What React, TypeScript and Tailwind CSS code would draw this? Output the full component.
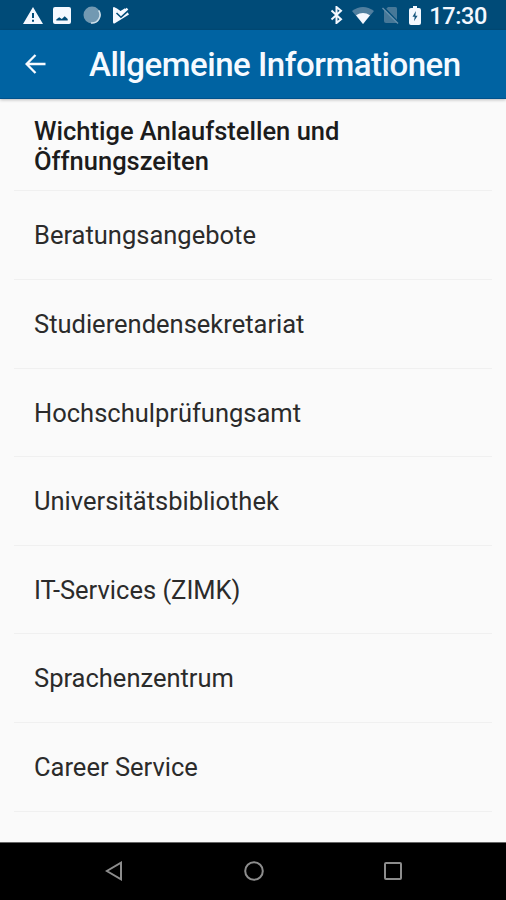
const entries = [
    'Beratungsangebote',
    'Studierendensekretariat',
    'Hochschulprüfungsamt',
    'Universitätsbibliothek',
    'IT-Services (ZIMK)',
    'Sprachenzentrum',
    'Career Service',
];

function StatusBar() {
    return (
        <div className="flex h-[30px] shrink-0 items-center justify-between bg-[#004b78] pl-[23px] pr-[19px] text-[#f4f8ff]">
            <div className="flex items-center">
                <svg width="20" height="17" viewBox="0 0 20 17" fill="currentColor">
                    <path fillRule="evenodd" d="M10 0 20 17H0ZM9 6v5h2V6ZM9 12.7v2h2v-2Z" />
                </svg>
                <svg className="ml-[10px]" width="18" height="17" viewBox="0 0 18 17" fill="currentColor">
                    <path fillRule="evenodd" d="M2 0h14q2 0 2 2v13q0 2-2 2H2q-2 0-2-2V2q0-2 2-2ZM3.3 13.5h11.4v-1.6L11.7 9.3 8.8 12 6.2 10.2 3.3 12.4Z" />
                </svg>
                <svg className="ml-[12px]" width="18" height="18" viewBox="0 0 18 18">
                    <circle cx="9" cy="9" r="8.5" fill="#7299b2" />
                    <path d="M15.7 4.4A8.2 8.2 0 0 1 8 17" fill="none" stroke="#cfe0ea" strokeWidth="1.6" />
                </svg>
                <svg className="ml-[12px]" width="17" height="17" viewBox="0 0 17 17">
                    <path d="M1 0 4 1.5 7.5 4 12 1.3 16 7.5 1.5 16.5Q0 17 0 15V1Q0 0 1 0Z" fill="currentColor" />
                    <path d="m4 5.5 4 3.7 7.5-6.5" fill="none" stroke="#004b78" strokeWidth="3" />
                    <path d="m4.7 4.3 3.3 3.3 6.5-6" fill="none" stroke="currentColor" strokeWidth="2.4" />
                </svg>
            </div>

            <div className="flex items-center">
                <svg width="13" height="18" viewBox="0 0 12 18" fill="none" stroke="currentColor" strokeWidth="2">
                    <path d="m1 4.5 9.5 8.8L6 17V1l4.5 3.7L1 13.5" />
                </svg>
                <svg className="ml-[9px]" width="22" height="17" viewBox="0 0 22 17">
                    <path d="M0 4Q11-4 22 4L11 17Z" fill="#517f9f" />
                    <path d="M4 8.2q7-4.6 14 0L11 17Z" fill="currentColor" />
                </svg>
                <svg className="ml-[8px]" width="17" height="18" viewBox="0 0 17 18">
                    <path d="M6 1h7.5Q15 1 15 2.5V17H4q-2 0-2-2V5Z" fill="#477898" />
                    <path d="m2 1.5 14.5 15.2" stroke="#004b78" strokeWidth="1.8" />
                    <path d="m.5 2 15.5 15.5" stroke="#6690ac" strokeWidth="1.4" />
                </svg>
                <svg className="ml-[10px]" width="12" height="19" viewBox="0 0 12 19">
                    <path d="M4 0h4v2h2q2 0 2 2v13q0 2-2 2H2q-2 0-2-2V4q0-2 2-2h2Z" fill="currentColor" />
                    <path d="M6.9 5 3.5 10.8h2.2L5 15.2 8.6 9.7H6.4Z" fill="#17567f" />
                </svg>
                <span className="ml-[8px] pt-[3px] text-[23.5px] font-medium leading-none tracking-[-0.35px]">17:30</span>
            </div>
        </div>
    );
}

function AppBar() {
    return (
        <header className="z-10 flex h-[69px] shrink-0 items-center border-b border-[#00528c] bg-[#0063a2] pl-[25px] text-[#f6faff] shadow-[0_1px_3px_rgba(0,0,0,0.25)]">
            <svg width="21" height="20" viewBox="0 0 21 20" fill="none" stroke="currentColor" strokeWidth="2.3">
                <path d="M20.5 10H2M10.5 1 1.6 10l8.9 9" />
            </svg>
            <h1 className="ml-[43px] whitespace-nowrap pt-px text-[33px] font-medium leading-none tracking-[-0.47px]">
                Allgemeine Informationen
            </h1>
        </header>
    );
}

function NavigationBar() {
    return (
        <nav className="flex h-[58px] shrink-0 items-center justify-between border-t border-[#666] bg-black pb-0.5 pl-[105px] pr-[104px]">
            <svg width="18" height="20" viewBox="0 0 18 20" fill="none" stroke="#8d8d8d" strokeWidth="2">
                <path d="M16 1.7v16.6L1.8 10Z" />
            </svg>
            <svg width="20" height="20" viewBox="0 0 20 20" fill="none" stroke="#8d8d8d" strokeWidth="2">
                <circle cx="10" cy="10" r="8.8" />
            </svg>
            <svg width="18" height="18" viewBox="0 0 18 18" fill="none" stroke="#8d8d8d" strokeWidth="2">
                <rect x="1" y="1" width="16" height="16" rx="1" />
            </svg>
        </nav>
    );
}

export default function App() {
    return (
        <div className="flex h-[900px] w-[506px] flex-col overflow-hidden bg-[#fafafa] font-[Roboto,sans-serif]">
            <StatusBar />
            <AppBar />
            <main className="min-h-0 flex-1 px-[14px] text-[25.5px] text-[#1c1c1c]">
                <h2 className="flex h-[92.4px] items-center border-b border-[#f0f0f0] pl-5 pt-[4px] font-medium leading-[29.5px]">
                    Wichtige Anlaufstellen und
                    <br />
                    Öffnungszeiten
                </h2>
                <ul>
                    {entries.map((entry) => (
                        <li
                            key={entry}
                            className="flex h-[88.6px] items-center border-b border-[#f0f0f0] pl-5 pt-[2px] leading-none text-[#2b2b2b]"
                        >
                            {entry}
                        </li>
                    ))}
                </ul>
            </main>
            <NavigationBar />
        </div>
    );
}
